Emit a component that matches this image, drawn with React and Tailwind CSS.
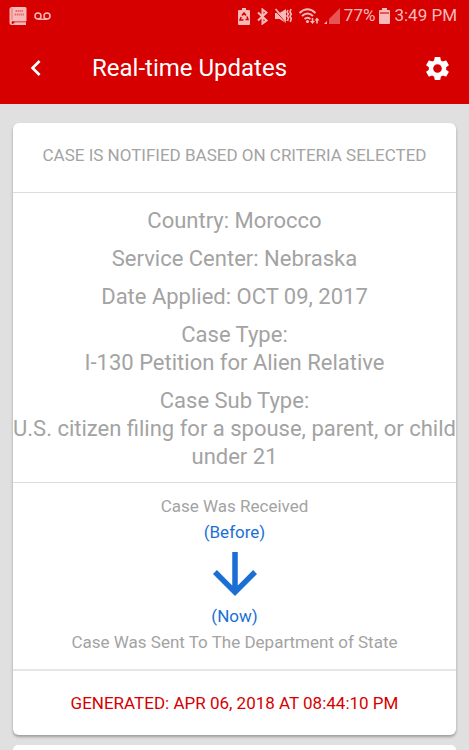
import React from 'react';
import { MdChevronLeft, MdSettings } from 'react-icons/md';

const details = [
  ['Country: Morocco'],
  ['Service Center: Nebraska'],
  ['Date Applied: OCT 09, 2017'],
  ['Case Type:', 'I-130 Petition for Alien Relative'],
  ['Case Sub Type:', 'U.S. citizen filing for a spouse, parent, or child under 21'],
];

const BookIcon = () => (
  <svg width="18" height="18" viewBox="0 0 18 18" fill="none">
    <path d="M3 0h13a1.500 1.500 0 0 1 1.500 1.500V14H4a1.500 1.500 0 0 0 0 3h13v1H3a2.500 2.500 0 0 1-2.500-2.500V2.500A2.500 2.500 0 0 1 3 0z" fill="#f8b9b9" />
    <path d="M4 14.500h13v2.500H4z" fill="#f8b9b9" />
    <path d="M3 1v12" stroke="#e67878" strokeWidth="1" />
    <path d="M6.500 4h8M5.500 7.500h10" stroke="#e67070" strokeWidth="2" strokeDasharray="1.500 0.500" />
    <path d="M5 15.500h12" stroke="#e67878" strokeWidth="0.700" />
    <circle cx="4.500" cy="15.500" r="1" fill="#d60000" />
  </svg>
);

const VoicemailIcon = () => (
  <svg width="17" height="9" viewBox="0 0 17 9" fill="none" stroke="#f8b9b9" strokeWidth="1.500">
    <circle cx="4" cy="4" r="3" />
    <circle cx="13" cy="4" r="3" />
    <path d="M4 7.200h9" />
  </svg>
);

const RecycleBatteryIcon = () => (
  <svg width="12" height="17" viewBox="0 0 12 17">
    <path d="M4 0h4v2h3q1 0 1 1v13q0 1-1 1H1q-1 0-1-1V3q0-1 1-1h3z" fill="#f8b9b9" />
    <path d="M4 7.500L6 5l2 2.500M9 8.500l1 3H7.500M5.500 12H2l1.200-3" fill="none" stroke="#d60000" strokeWidth="1.500" />
  </svg>
);

const BluetoothIcon = () => (
  <svg width="11" height="17" viewBox="0 0 11 17" fill="none" stroke="#f8b9b9" strokeWidth="2">
    <path d="M1 4.500l8.500 8L5.500 15.500v-14l4 3-8.500 8" />
  </svg>
);

const VibrateIcon = () => (
  <svg width="17" height="16" viewBox="0 0 17 16" fill="none" stroke="#f8b9b9">
    <path d="M0 5h4.500L11 1v14l-6.500-4H0z" fill="#f8b9b9" stroke="none" />
    <path d="M0 2.500l11 12" stroke="#d60000" strokeWidth="1" />
    <path d="M0.500 1L11 13" strokeWidth="1.800" />
    <path d="M13 2l-1 2 1.500 2-1.500 2 1.500 2-1 3M16 1l-1 3 1.300 2-1.300 2.500 1.300 2-1 3.500" strokeWidth="1.600" />
  </svg>
);

const WifiIcon = () => (
  <svg width="21" height="16" viewBox="0 0 21 16" fill="none" stroke="#f8b9b9">
    <path d="M0.500 5q8-7.500 16 0M3 8q5.500-5 11 0M5.500 11q3-2.500 6 0" strokeWidth="2" />
    <circle cx="8.500" cy="13.500" r="1.600" fill="#f8b9b9" stroke="none" />
    <path d="M13.500 10v4M18 11v4.500" strokeWidth="1.600" />
    <path d="M11 13h5l-2.500 3zM15.500 12.500h5L18 9.500z" fill="#f8b9b9" stroke="none" />
  </svg>
);

const SignalIcon = () => (
  <svg width="16" height="16" viewBox="0 0 16 16">
    <path d="M16 0v16H5v-5z" fill="#e65454" />
    <path d="M0 16l3-3v3z" fill="#f8b9b9" />
  </svg>
);

const BatteryIcon = () => (
  <svg width="11" height="16" viewBox="0 0 11 16">
    <path d="M3 0h5v2h2q1 0 1 1v12q0 1-1 1H1q-1 0-1-1V3q0-1 1-1h2z" fill="#f8b9b9" />
    <path d="M1 4h9v2H1z" fill="#e65454" />
  </svg>
);

const ArrowDown = () => (
  <svg className="mx-auto my-[7px]" width="44" height="44" viewBox="4 4 16 16" fill="#1b6fd4">
    <path d="M20 12l-1.410-1.410L13 16.170V4h-2v12.170l-5.580-5.590L4 12l8 8 8-8z" />
  </svg>
);

const StatusBar = () => (
  <div className="flex h-8 items-center justify-between pl-[9px] pr-3 text-[17px] text-[#f8b9b9]">
    <div className="flex items-center gap-[7px]">
      <BookIcon />
      <VoicemailIcon />
    </div>
    <div className="flex items-center gap-1">
      <div className="flex items-center gap-[7px]">
        <RecycleBatteryIcon />
        <BluetoothIcon />
        <VibrateIcon />
        <WifiIcon />
      </div>
      <SignalIcon />
      <span>77%</span>
      <BatteryIcon />
      <span>3:49 PM</span>
    </div>
  </div>
);

export default function App() {
  return (
    <div className="flex min-h-screen flex-col bg-[#e0e0e0] font-['Roboto',sans-serif] text-[#a3a3a3]">
      <header className="bg-[#d60000] text-white">
        <StatusBar />
        <div className="flex h-18 items-center pl-5 pr-[17px]">
          <button type="button" aria-label="Back">
            <MdChevronLeft size={32} />
          </button>
          <h1 className="flex-1 pl-10 text-2xl">Real-time Updates</h1>
          <button type="button" aria-label="Settings">
            <MdSettings size={29} />
          </button>
        </div>
      </header>

      <main className="flex flex-1 flex-col gap-[10px] px-[13px] pt-[19px] text-center">
        <article className="rounded-md bg-white shadow-[0_2px_3px_rgba(0,0,0,0.3)]">
          <h2 className="border-b border-[#dcdcdc] pt-5 pb-[25px] text-[17px] leading-6">
            CASE IS NOTIFIED BASED ON CRITERIA SELECTED
          </h2>

          <div className="flex flex-col gap-[10px] border-b border-[#dcdcdc] pt-[14px] pb-[11px] text-[22px] leading-7">
            {details.map((lines) => (
              <div key={lines[0]}>
                {lines.map((line) => (
                  <p key={line}>{line}</p>
                ))}
              </div>
            ))}
          </div>

          <div className="border-b-2 border-[#e6e6e6] pt-[10px] pb-[14px] text-[17px] leading-[26px]">
            <p>Case Was Received</p>
            <p className="text-[#1b6fd4]">(Before)</p>
            <ArrowDown />
            <p className="text-[#1b6fd4]">(Now)</p>
            <p>Case Was Sent To The Department of State</p>
          </div>

          <p className="py-5 text-[17px] leading-6 text-[#d60000]">
            GENERATED: APR 06, 2018 AT 08:44:10 PM
          </p>
        </article>

        <article className="min-h-1 flex-1 rounded-t-md bg-white" />
      </main>
    </div>
  );
}
